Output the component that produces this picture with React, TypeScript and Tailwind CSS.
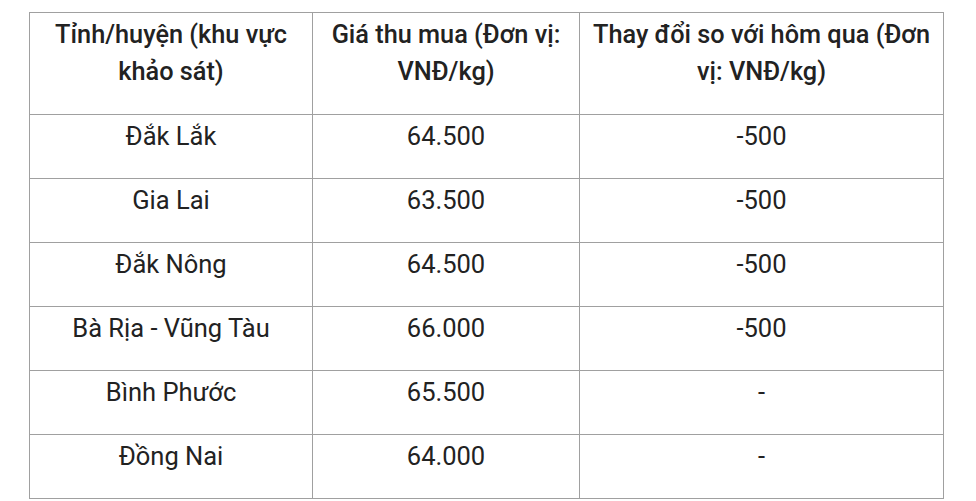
const rows = [
  ["Đắk Lắk", "64.500", "-500"],
  ["Gia Lai", "63.500", "-500"],
  ["Đắk Nông", "64.500", "-500"],
  ["Bà Rịa - Vũng Tàu", "66.000", "-500"],
  ["Bình Phước", "65.500", "-"],
  ["Đồng Nai", "64.000", "-"],
];

const headers = [
  "Tỉnh/huyện (khu vực khảo sát)",
  "Giá thu mua (Đơn vị: VNĐ/kg)",
  "Thay đổi so với hôm qua (Đơn vị: VNĐ/kg)",
];

const cell = "border border-[#a0a0a0] px-[10px] pt-[3px] pb-[24px] text-center align-top";

export default function App() {
  return (
    <div className="min-h-[501px] bg-white pl-[29px] pt-[12px] font-['Roboto',sans-serif] text-[25.5px] text-[#222]">
      <table className="w-[914px] table-fixed border-collapse">
        <colgroup>
          <col className="w-[283px]" />
          <col className="w-[267px]" />
          <col className="w-[364px]" />
        </colgroup>
        <thead>
          <tr>
            {headers.map((h) => (
              <th key={h} className={`${cell} text-[25.3px] font-medium leading-[37px]`}>
                {h}
              </th>
            ))}
          </tr>
        </thead>
        <tbody>
          {rows.map((r) => (
            <tr key={r[0]}>
              {r.map((v, i) => (
                <td key={i} className={`${cell} font-normal leading-[36px]`}>
                  {v}
                </td>
              ))}
            </tr>
          ))}
        </tbody>
      </table>
    </div>
  );
}
